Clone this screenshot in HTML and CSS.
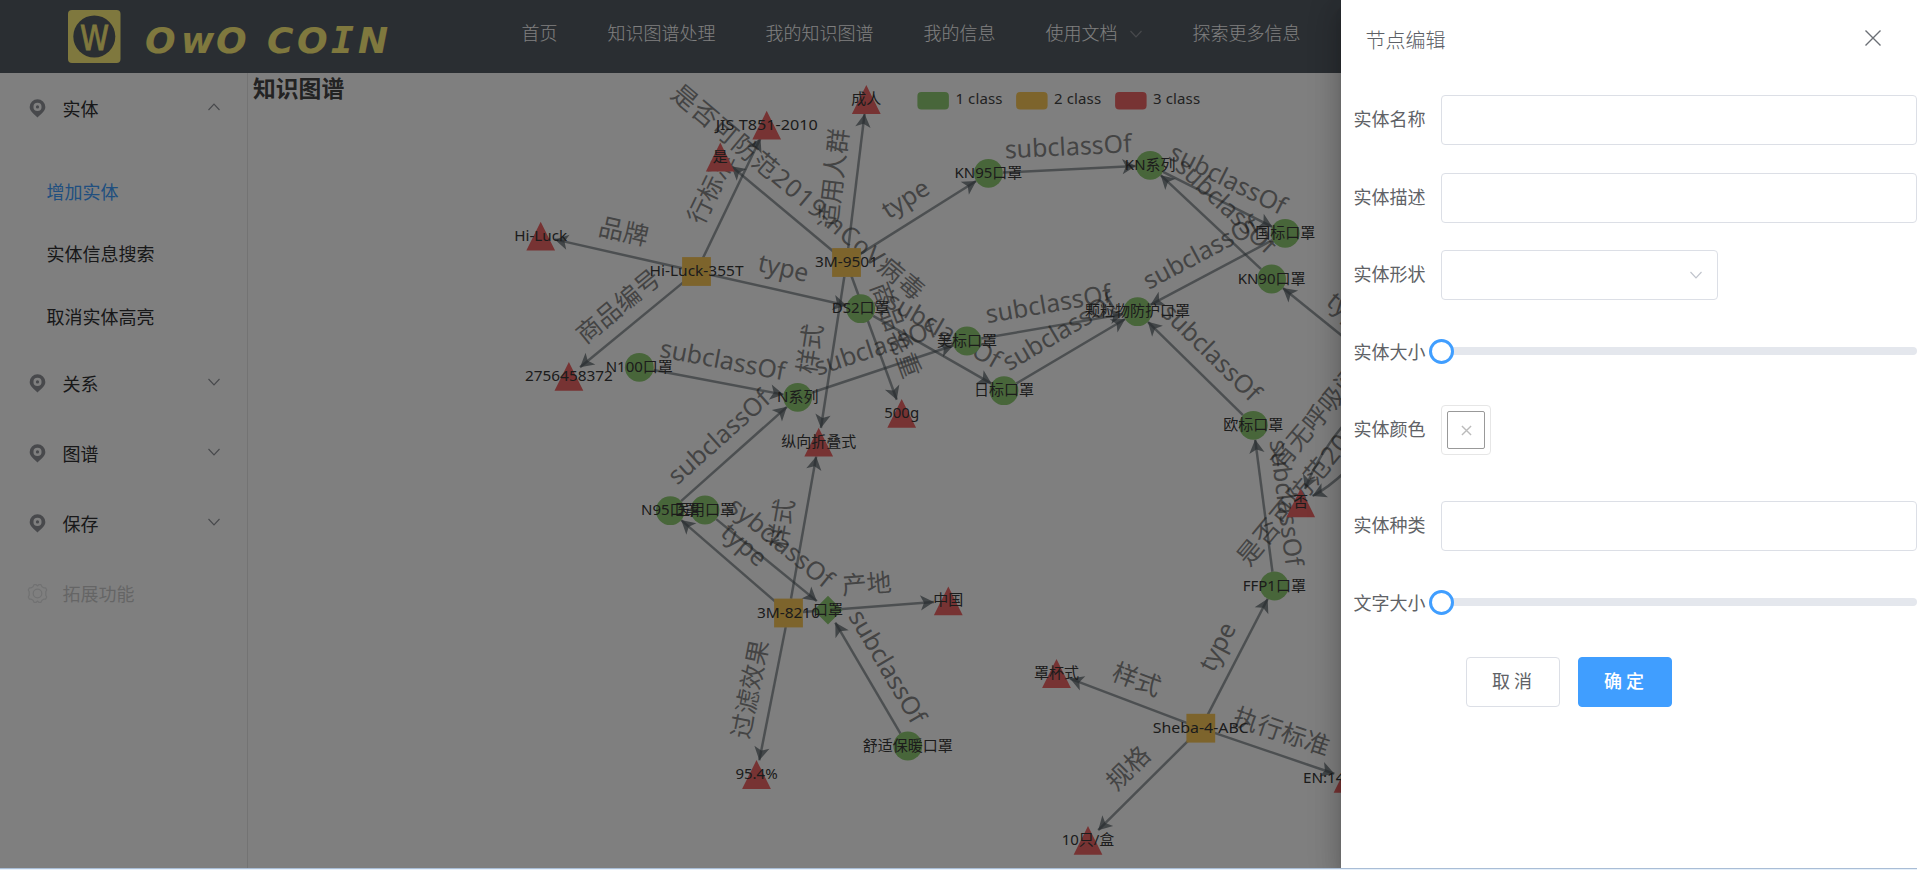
FILE: index.html
```html
<!DOCTYPE html>
<html lang="zh-CN">
<head>
<meta charset="utf-8">
<title>OwO COIN 知识图谱</title>
<link rel="stylesheet" href="styles.css">
</head>
<body>
<svg class="defs" width="0" height="0">
  <symbol id="chevron" viewBox="0 0 14 14"><path d="M1.5 4 L7 9.8 L12.5 4" fill="none" stroke="currentColor" stroke-width="1.2"/></symbol>
  <symbol id="pin" viewBox="0 0 18 20"><path fill="currentColor" fill-rule="evenodd" d="M9 .3a8.300 8.300 0 0 0-8.300 8.200c0 4 4 7 8.300 11 4.300-4 8.300-7 8.300-11A8.300 8.300 0 0 0 9 .3zM9 4a4.300 4.300 0 1 1 0 8.600 4.300 4.300 0 0 1 0-8.600z"/><circle cx="9" cy="8.300" r="1.700" fill="currentColor"/></symbol>
  <symbol id="gear" viewBox="0 0 22 22"><g fill="none" stroke="currentColor" stroke-width="1.300" stroke-linejoin="round"><path d="M7.500 1.600h2l1.500 1.500 1.500-1.500h2l1.200 2.400 1.800 1 2 .1 1.200 2.200-1 1.700v4l1 1.700-1.200 2.200-2 .1-1.800 1-1.200 2.400h-2l-1.500-1.500-1.500 1.500h-2l-1.200-2.400-1.800-1-2-.1-1.200-2.200 1-1.700v-4l-1-1.700 1.200-2.200 2-.1 1.800-1z"/><circle cx="11" cy="11" r="4.500"/></g></symbol>
</svg>
<div class="page">
  <header class="header">
    <svg class="logo" viewBox="0 0 360 53">
      <rect x="0" y="0" width="52.500" height="53" rx="4"/>
      <ellipse class="logo-hole" cx="26.300" cy="26.500" rx="21" ry="21"/>
      <text class="logo-w" x="26.500" y="40" textLength="29" lengthAdjust="spacingAndGlyphs">W</text>
      <text class="logo-name" y="42.500" x="77 113 148 199 229">OwOCO</text>
      <text class="logo-name mono" y="42.500" x="263">I</text>
      <text class="logo-name" y="42.500" x="290">N</text>
    </svg>
    <nav class="nav">
      <a>首页</a><a>知识图谱处理</a><a>我的知识图谱</a><a>我的信息</a>
      <a>使用文档<svg class="nav-arrow"><use href="#chevron"/></svg></a><a>探索更多信息</a>
    </nav>
  </header>
  <div class="body">
    <aside class="side">
      <div class="item"><svg class="pin"><use href="#pin"/></svg><span>实体</span><svg class="arrow up"><use href="#chevron"/></svg></div>
      <ul class="sub"><li class="active">增加实体</li><li>实体信息搜索</li><li>取消实体高亮</li></ul>
      <div class="item"><svg class="pin"><use href="#pin"/></svg><span>关系</span><svg class="arrow"><use href="#chevron"/></svg></div>
      <div class="item"><svg class="pin"><use href="#pin"/></svg><span>图谱</span><svg class="arrow"><use href="#chevron"/></svg></div>
      <div class="item"><svg class="pin"><use href="#pin"/></svg><span>保存</span><svg class="arrow"><use href="#chevron"/></svg></div>
      <div class="item disabled"><svg class="gear"><use href="#gear"/></svg><span>拓展功能</span></div>
    </aside>
    <main class="main">
      <h1 class="title">知识图谱</h1>
      <svg class="graph" id="graph" viewBox="248 73 1669 795"></svg>
    </main>
  </div>
  <div class="mask">
    <section class="drawer">
      <div class="drawer-head"><span>节点编辑</span>
        <svg class="close" viewBox="0 0 18 18"><path d="M1.500 1.500 L16.500 16.500 M16.500 1.500 L1.500 16.500"/></svg></div>
      <div class="row"><label>实体名称</label><div class="field"><div class="input"></div></div></div>
      <div class="row"><label>实体描述</label><div class="field"><div class="input"></div></div></div>
      <div class="row"><label>实体形状</label><div class="field"><div class="input select"><svg><use href="#chevron"/></svg></div></div></div>
      <div class="row"><label>实体大小</label><div class="field"><div class="slider"><i></i></div></div></div>
      <div class="row tall"><label>实体颜色</label><div class="field"><div class="color"><div><svg viewBox="0 0 12 12"><path d="M1 1 L11 11 M11 1 L1 11"/></svg></div></div></div></div>
      <div class="row"><label>实体种类</label><div class="field"><div class="input"></div></div></div>
      <div class="row"><label>文字大小</label><div class="field"><div class="slider"><i></i></div></div></div>
      <div class="buttons"><button class="btn">取 消</button><button class="btn primary">确 定</button></div>
    </section>
  </div>
</div>
<script src="graph.js"></script>
</body>
</html>
```

FILE: styles.css
```css
* { box-sizing: border-box; }
body {
  margin: 0;
  height: 870px;
  overflow: hidden;
  background: #e6f0fa;
  font-family: "Noto Sans CJK SC", sans-serif;
  font-weight: 400;
  font-size: 18px;
  color: #303133;
}
.defs { position: absolute; }
.page {
  height: 869px;
  border-bottom: 1px solid #a9bdd6;
  background: #fff;
  display: flex;
  flex-direction: column;
  overflow: hidden;
}
.header {
  height: 73px;
  flex: none;
  background: #545c64;
  display: flex;
  padding-left: 68px;
}
.logo { width: 360px; height: 53px; margin-top: 10px; fill: #fff07c; flex: none; }
.logo .logo-hole { fill: #545c64; }
.logo-w { font-family: "DejaVu Sans", sans-serif; font-size: 33px; text-anchor: middle; stroke: #fff07c; stroke-width: .8; }
.logo-name { font-family: "DejaVu Sans", sans-serif; font-size: 36px; font-weight: 700; font-style: italic; }
.logo .mono { font-family: "DejaVu Sans Mono", monospace; font-size: 38px; }
.nav { display: flex; margin-left: 68.5px; }
.nav a {
  padding: 0 25px;
  height: 64.5px;
  color: #fff;
  display: flex;
  align-items: center;
  white-space: nowrap;
  font-weight: 300;
}
.nav-arrow { width: 14px; height: 14px; margin: 4px 0 0 11px; color: #909399; }
.body { flex: 1; display: flex; }
.side { width: 248px; border-right: 1px solid #e6e6e6; flex: none; }
.item {
  height: 70px;
  display: flex;
  align-items: center;
  padding: 0 26px 0 24px;
}
.item .pin { width: 17px; height: 19px; margin: 0 5px; color: #909399; }
.item .gear { width: 21px; height: 21px; margin: 0 3px; color: #909399; }
.item span { margin: -1px 0 0 11.5px; flex: 1; }
.item .arrow { width: 14px; height: 14px; color: #909399; margin-top: -3px; }
.item .up { transform: scaleY(-1); }
.disabled { opacity: .25; }
.sub { list-style: none; margin: 0; padding: 16.5px 0 1px 46.5px; }
.sub li { height: 62.6px; line-height: 62.6px; }
.sub .active { color: #409eff; }
.main { flex: 1; position: relative; padding: 0 5px; }
.title { margin: 0; font-size: 22.8px; line-height: 30px; font-weight: 700; color: #464646; }
.graph { position: absolute; left: 0; top: 0; width: 1669px; height: 795px; font-family: "Noto Sans", "Noto Sans CJK SC", sans-serif; font-weight: 400; }
.edge { fill: none; stroke: #4b565b; stroke-width: 2.5; opacity: .57; }
.edge-arrow { fill: #4b565b; opacity: .68; }
.edge-label { font-size: 25px; fill: #333; opacity: .58; text-anchor: middle; }
.edge-label.start { text-anchor: start; }
.node-label { font-size: 15px; fill: #383838; text-anchor: middle; }
.legend-label { font-size: 15px; fill: #444; }
.c1 { fill: #91cc75; }
.c2 { fill: #fac858; }
.c3 { fill: #ee6666; }
.mask { position: absolute; left: 0; right: 0; top: 0; height: 868px; overflow: hidden; background: rgba(0, 0, 0, .5); display: flex; justify-content: flex-end; }
.drawer {
  width: 576px;
  height: 868px;
  background: #fff;
  color: #606266;
  box-shadow: 0 8px 10px -5px rgba(0,0,0,.2), 0 16px 24px 2px rgba(0,0,0,.14), 0 6px 30px 5px rgba(0,0,0,.12);
}
.drawer-head {
  height: 95px;
  padding: 25px 35.5px 0 24.5px;
  display: flex;
  justify-content: space-between;
  font-size: 20px;
  line-height: 30px;
  font-weight: 300;
  color: #5c6066;
}
.close { width: 18px; height: 18px; margin-top: 3.5px; fill: none; stroke: #6b6f75; stroke-width: 1.4; }
.row { display: flex; height: 50px; margin-bottom: 27.5px; }
.row.tall { height: 68.5px; }
.row label { width: 100px; padding-left: 12.5px; line-height: 47px; flex: none; }
.field { flex: 1; }
.input { height: 50px; border: 1px solid #dcdfe6; border-radius: 4px; }
.select { width: 277px; display: flex; align-items: center; justify-content: flex-end; padding-right: 14px; color: #c0c4cc; }
.select svg { width: 14px; height: 14px; }
.slider { height: 8px; margin-top: 19.5px; background: #e4e7ed; border-radius: 4px; display: flex; align-items: center; }
.slider i { width: 25px; height: 25px; flex: none; margin-left: -12.5px; border: 3px solid #409eff; border-radius: 50%; background: #fff; }
.color { width: 50px; height: 50px; border: 1px solid #e6e6e6; border-radius: 4px; padding: 5px; }
.color div { height: 38px; border: 1px solid #999; border-radius: 2px; display: flex; align-items: center; justify-content: center; }
.color svg { width: 11px; height: 11px; stroke: #bbb; stroke-width: 1.5; fill: none; }
.buttons { display: flex; gap: 18px; padding: .5px 0 0 125px; }
.btn {
  width: 94px;
  height: 50px;
  border: 1px solid #dcdfe6;
  border-radius: 4px;
  background: #fff;
  color: #606266;
  font: inherit;
  padding: 0 2px 4px 0;
}
.btn.primary { background: #409eff; border-color: #409eff; color: #fff; font-weight: 500; }
```

FILE: graph.js
```javascript
// name: [x, y, class, label, label width]
const nodes = {
  adult: [866.3, 99.5, 3, '成人'],
  jis: [766.7, 125.2, 3, 'JIS T851-2010', 102],
  yes: [720.3, 157, 3, '是'],
  luck: [540.7, 236.2, 3, 'Hi-Luck', 53],
  luck355: [696.5, 271.5, 2, 'Hi-Luck-355T', 94],
  m9501: [846.5, 262.5, 2, '3M-9501', 63],
  ds2: [860.7, 308.7, 1, 'DS2口罩'],
  num: [568.9, 376.3, 3, '2756458372', 88],
  n100: [639.3, 367.3, 1, 'N100口罩'],
  nser: [797.7, 397.3, 1, 'N系列'],
  g500: [901.7, 413.3, 3, '500g'],
  fold: [818.7, 442.2, 3, '纵向折叠式'],
  n95: [670.3, 510.7, 1, 'N95口罩'],
  med: [705, 510, 1, '医用口罩'],
  m8210: [788.5, 613, 2, '3M-8210', 63],
  mask: [828, 610.2, 0, '口罩'],
  china: [948.3, 600.8, 3, '中国'],
  p95: [756.5, 774.5, 3, '95.4%'],
  warm: [907.8, 746, 1, '舒适保暖口罩'],
  cup: [1056.5, 673.5, 3, '罩杯式'],
  sheba: [1200.8, 728.2, 2, 'Sheba-4-ABC', 96],
  en: [1348, 778.4, 3, 'EN:149-2001', 90],
  box: [1088, 840.3, 3, '10只/盒'],
  ffp1: [1274.3, 586, 1, 'FFP1口罩'],
  eu: [1253.3, 425.3, 1, '欧标口罩'],
  no: [1300.7, 502.8, 3, '否'],
  kn95: [988.4, 173.3, 1, 'KN95口罩'],
  knser: [1150.2, 165.3, 1, 'KN系列'],
  gb: [1285.2, 233.3, 1, '国标口罩'],
  kn90: [1271.6, 279, 1, 'KN90口罩'],
  main: [1137.6, 311.7, 1, '颗粒物防护口罩'],
  us: [967, 341, 1, '美标口罩'],
  jp: [1004, 390.7, 1, '日标口罩']
};
const S = 'subclassOf';
const LONG = '是否可防范2019-nCoV病毒';
const edges = [
  ['luck355', 'luck', '品牌'], ['luck355', 'jis', '行标准'], ['luck355', 'num', '商品编号'], ['luck355', 'ds2', 'type'],
  ['m9501', 'yes', LONG], ['m9501', 'adult', '适用人群'], ['m9501', 'kn95', 'type'],
  ['m9501', 'fold', '样式'], ['m9501', 'g500', '商品毛重'], ['ds2', 'jp', S], ['n100', 'nser', S], ['nser', 'us', S],
  ['n95', 'nser', S], ['us', 'main', S], ['jp', 'main', S], ['gb', 'main', S], ['eu', 'main', S], ['kn95', 'knser', S],
  ['knser', 'gb', S], ['kn90', 'knser', S], ['ffp1', 'eu', S], ['med', 'mask', 'sybclassOf'], ['m8210', 'n95', 'type'],
  ['m8210', 'china', '产地'], ['m8210', 'fold', '样式'], ['m8210', 'p95', '过滤效果'], ['warm', 'mask', S],
  ['sheba', 'cup', '样式'], ['sheba', 'ffp1', 'type'], ['sheba', 'en', '执行标准'], ['sheba', 'box', '规格'],
  [[1400.5, 383], 'kn90', 'type']
];
const widths = { subclassOf: 127, sybclassOf: 127, type: 51, [LONG]: 320 };
const R = 14.4;
let out = '';

function arrow(x, y, deg) {
  return `<path class="edge-arrow" transform="translate(${x} ${y}) rotate(${deg})" d="M0 0 L-13.5 7.7 L-10 0 L-13.5 -7.7 Z"/>`;
}
function edgeLabel(text, x, y, deg, cls = '') {
  const w = widths[text] ? ` textLength="${widths[text]}" lengthAdjust="${text === LONG ? 'spacing' : 'spacingAndGlyphs'}"` : '';
  return `<text class="edge-label ${cls}" transform="translate(${x} ${y}) rotate(${deg})" y="-14"${w}>${text}</text>`;
}

for (const [a, b, text] of edges) {
  const [ax, ay] = nodes[a] || a, [bx, by] = nodes[b];
  const len = Math.hypot(bx - ax, by - ay), ux = (bx - ax) / len, uy = (by - ay) / len;
  const x1 = ax + ux * R, y1 = ay + uy * R, x2 = bx - ux * R, y2 = by - uy * R;
  const deg = Math.atan2(uy, ux) * 180 / Math.PI;
  out += `<line class="edge" x1="${x1}" y1="${y1}" x2="${x2}" y2="${y2}"/>` + arrow(x2, y2, deg);
  out += edgeLabel(text, (ax + bx) / 2, (ay + by) / 2, ux < 0 ? deg + 180 : deg);
}

// curved edges arriving from nodes behind the drawer
out += '<path class="edge" d="M1305 489 Q1318 455 1345 423"/>' + arrow(1305, 489, 112);
out += '<path class="edge" d="M1312.5 496 Q1328 488 1346 471"/>' + arrow(1312.5, 496, 155);
out += edgeLabel(LONG, 1259.8, 576.3, -50.5, 'start');
out += edgeLabel('有无呼吸阀', 1293, 481, -50, 'start');

for (const [x, y, c] of Object.values(nodes)) {
  if (c === 1) out += `<circle class="c1" cx="${x}" cy="${y}" r="${R}"/>`;
  if (c === 2) out += `<rect class="c2" x="${x - R}" y="${y - R}" width="${2 * R}" height="${2 * R}"/>`;
  if (c === 3) out += `<path class="c3" d="M${x} ${y - R} l${R} ${2 * R} h${-2 * R} z"/>`;
  if (c === 0) out += `<path class="c1" d="M${x} ${y - R} l${R} ${R} l${-R} ${R} l${-R} ${-R} z"/>`;
}
for (const [x, y, , text, w] of Object.values(nodes)) {
  const tl = w ? ` textLength="${w}" lengthAdjust="spacingAndGlyphs"` : '';
  out += `<text class="node-label" x="${x}" y="${y + 4.5}"${tl}>${text}</text>`;
}
[917.4, 1016.1, 1115.1].forEach((x, i) => {
  out += `<rect class="c${i + 1}" x="${x}" y="92" width="31.5" height="17.4" rx="4"/>`;
  out += `<text class="legend-label" x="${x + 38}" y="104" textLength="47">${i + 1} class</text>`;
});
document.getElementById('graph').innerHTML = out;
```
